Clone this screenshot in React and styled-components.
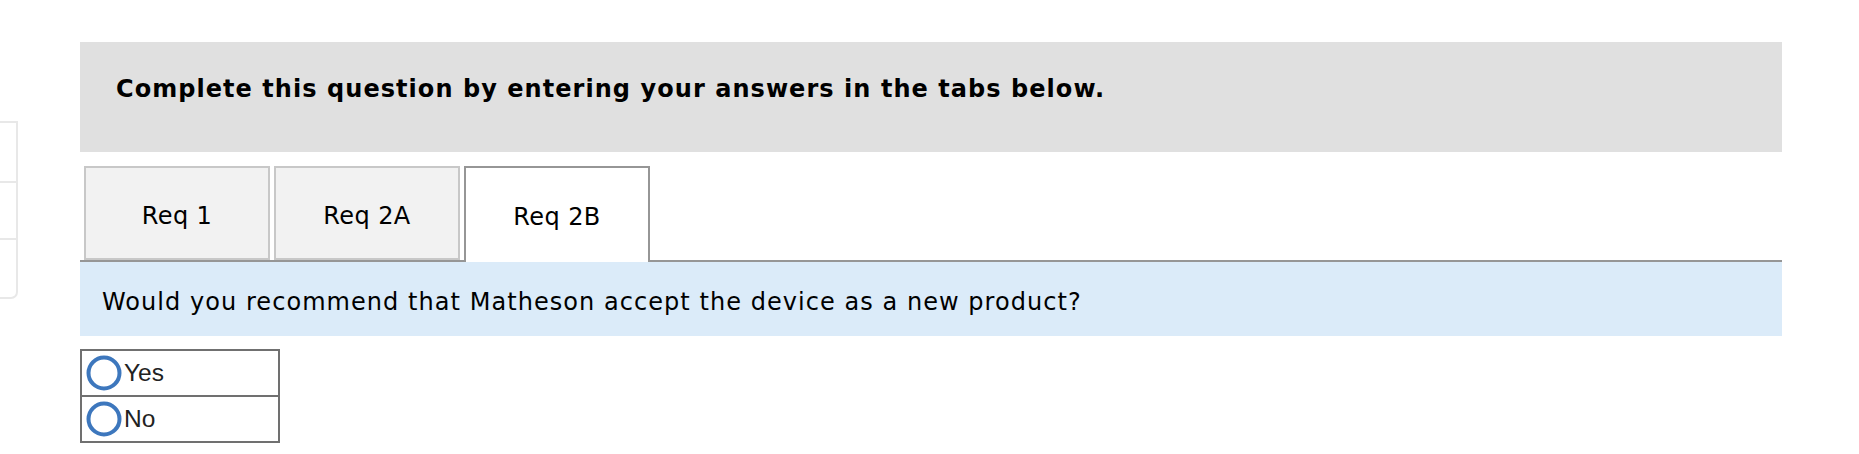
import React, { useState } from "react";
import styled, { createGlobalStyle } from "styled-components";

const Global = createGlobalStyle`
  html, body { margin: 0; padding: 0; background: #ffffff; }
  body { font-family: "DejaVu Sans", Verdana, sans-serif; color: #000; }
`;

const Page = styled.div`
  display: flex;
  align-items: flex-start;
  width: 1859px;
  min-height: 454px;
`;

const SideCard = styled.div`
  margin-top: 121px;
  width: 16px;
  display: flex;
  flex-direction: column;
  border: 2px solid #e8e8e8;
  border-left: none;
  border-radius: 0 0 7px 0;
`;

const SideCell = styled.div`
  height: ${(p) => p.$h}px;
  border-top: ${(p) => (p.$first ? "none" : "2px solid #e8e8e8")};
`;

const Main = styled.div`
  margin-left: 62px;
  margin-top: 42px;
  width: 1702px;
  display: flex;
  flex-direction: column;
`;

const Banner = styled.div`
  background: #e0e0e0;
  height: 110px;
  box-sizing: border-box;
  padding: 33px 36px 0;
  font-weight: bold;
  font-size: 24px;
  line-height: 28px;
  letter-spacing: 1.05px;
  white-space: nowrap;
`;

const TabBar = styled.div`
  margin-top: 14px;
  display: flex;
  gap: 4px;
  padding-left: 4px;
  border-bottom: 2px solid #969696;
  height: 94px;
`;

const Tab = styled.button`
  width: 186px;
  height: ${(p) => (p.$active ? "96px" : "94px")};
  margin-bottom: ${(p) => (p.$active ? "-2px" : "0")};
  padding: ${(p) => (p.$active ? "5px 0 2px" : "5px 0 0")};
  box-sizing: border-box;
  background: ${(p) => (p.$active ? "#ffffff" : "#f2f2f2")};
  border: 2px solid ${(p) => (p.$active ? "#969696" : "#c8c8c8")};
  border-bottom: ${(p) => (p.$active ? "none" : "2px solid #c8c8c8")};
  font-family: "DejaVu Sans", Verdana, sans-serif;
  font-size: 24px;
  letter-spacing: 0.4px;
  color: #000;
  cursor: pointer;
`;

const Question = styled.div`
  background: #dbebf9;
  height: 74px;
  box-sizing: border-box;
  display: flex;
  align-items: center;
  padding: 5px 0 0 22px;
  font-size: 24px;
  letter-spacing: 1.05px;
  white-space: nowrap;
`;

const Options = styled.div`
  margin-top: 13px;
  width: 200px;
  box-sizing: border-box;
  border: 2px solid #707070;
  display: flex;
  flex-direction: column;
`;

const Option = styled.label`
  height: 44px;
  display: flex;
  align-items: center;
  gap: 2px;
  padding-left: 4px;
  border-top: ${(p) => (p.$first ? "none" : "2px solid #707070")};
  font-family: "Liberation Sans", Arial, sans-serif;
  font-size: 24.5px;
  color: #222;
  cursor: pointer;
`;

const Radio = ({ checked }) => (
  <svg width="36" height="36" viewBox="0 0 36 36">
    <circle cx="18" cy="18" r="15.5" fill="#fff" stroke="#3d77bd" strokeWidth="4" />
    {checked && <circle cx="18" cy="18" r="8" fill="#3d77bd" />}
  </svg>
);

export default function App() {
  const [tab, setTab] = useState(2);
  const [choice, setChoice] = useState(null);
  const tabs = ["Req 1", "Req 2A", "Req 2B"];
  return (
    <>
      <Global />
      <Page>
        <SideCard>
          <SideCell $first $h={58} />
          <SideCell $h={55} />
          <SideCell $h={57} />
        </SideCard>
        <Main>
          <Banner>Complete this question by entering your answers in the tabs below.</Banner>
          <TabBar>
            {tabs.map((t, i) => (
              <Tab key={t} $active={tab === i} onClick={() => setTab(i)}>
                {t}
              </Tab>
            ))}
          </TabBar>
          <Question>Would you recommend that Matheson accept the device as a new product?</Question>
          <Options>
            {["Yes", "No"].map((o, i) => (
              <Option key={o} $first={i === 0} onClick={() => setChoice(o)}>
                <Radio checked={choice === o} />
                {o}
              </Option>
            ))}
          </Options>
        </Main>
      </Page>
    </>
  );
}
